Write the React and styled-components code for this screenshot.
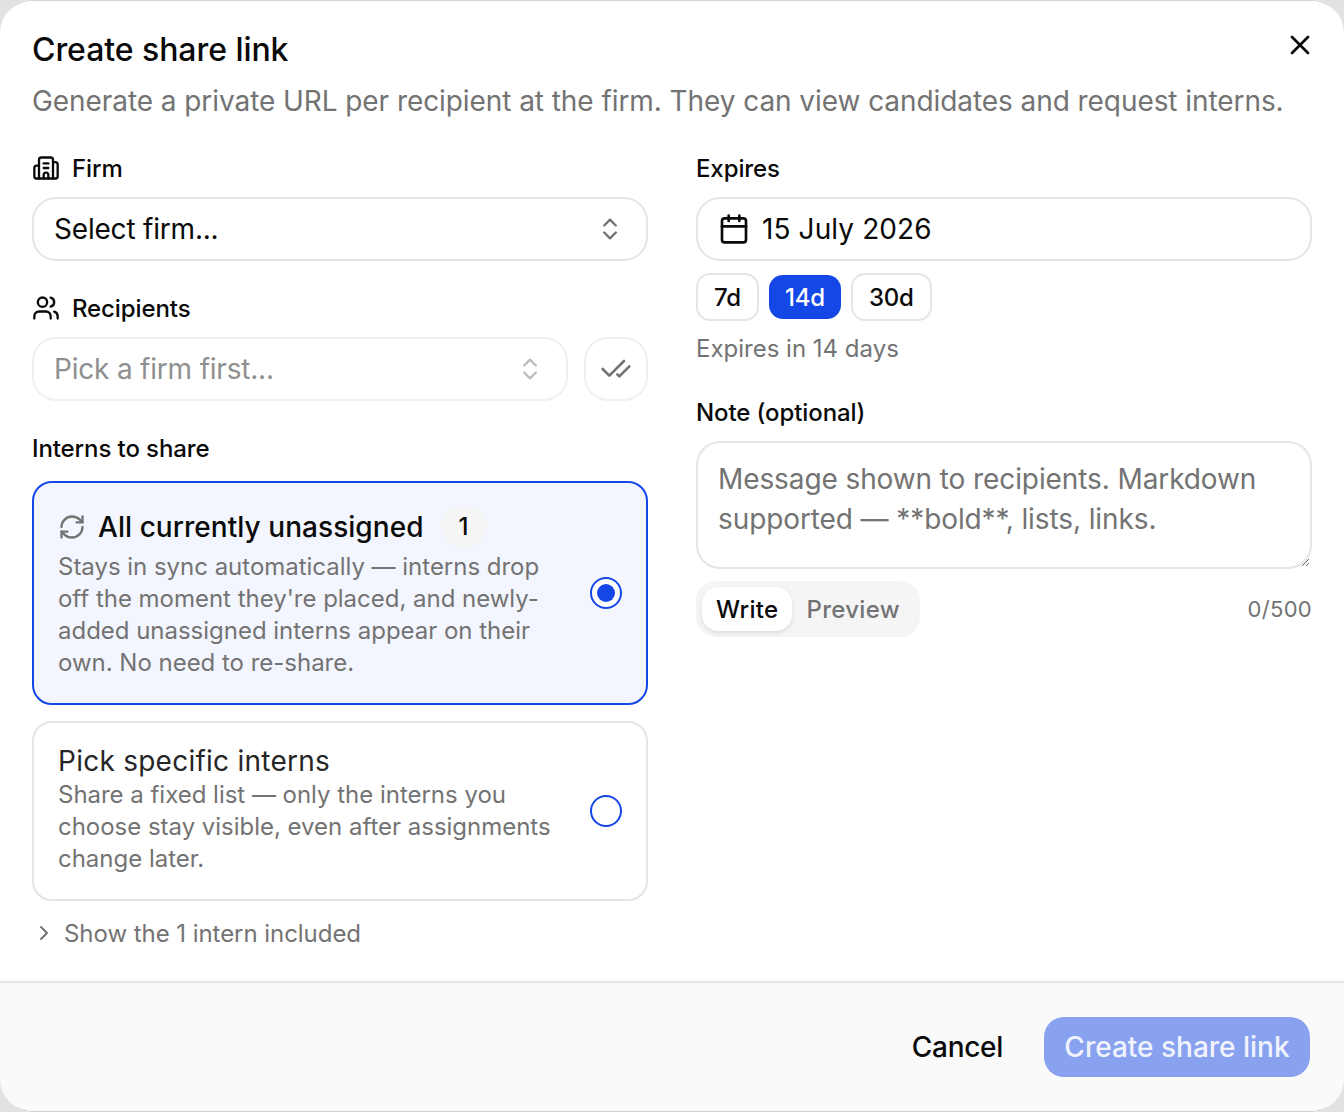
import React from "react";
import styled, { createGlobalStyle } from "styled-components";
import { Building2, Users, ChevronsUpDown, CheckCheck, Calendar, RefreshCw, ChevronRight, X } from "lucide-react";

const Global = createGlobalStyle`
	* { box-sizing: border-box; }
	html, body { margin: 0; padding: 0; height: 100%; }
	body { font-family: Inter, "Noto Sans", sans-serif; color: #0a0a0a; overflow: hidden; }
`;

const Backdrop = styled.div`
	width: 1344px;
	height: 1112px;
	background: #e2e2e2;
	overflow: hidden;
`;

const Modal = styled.div`
	position: relative;
	width: 100%;
	height: 100%;
	display: flex;
	flex-direction: column;
	background: #fff;
	border-radius: 32px;
	overflow: hidden;
	&::after {
		content: "";
		position: absolute;
		inset: 0;
		border-radius: 32px;
		box-shadow: inset 0 1px 0 #d4d4d4, inset 0 -1px 0 #cfcfcf;
		pointer-events: none;
	}
`;

const Body = styled.div`
	flex: 1;
	padding: 32px 32px 0;
`;

const Title = styled.h2`
	margin: 0;
	font-size: 32px;
	line-height: 36px;
	font-weight: 450;
	letter-spacing: -0.06px;
`;

const Subtitle = styled.p`
	margin: 13px 0 0;
	font-size: 28px;
	line-height: 40px;
	color: #737373;
	letter-spacing: -0.07px;
`;

const CloseButton = styled.button`
	position: absolute;
	top: 27px;
	right: 26px;
	width: 36px;
	height: 36px;
	padding: 0;
	display: flex;
	align-items: center;
	justify-content: center;
	background: none;
	border: none;
	color: #0a0a0a;
`;

const Columns = styled.div`
	display: grid;
	grid-template-columns: 616px 616px;
	column-gap: 48px;
	margin-top: 32px;
`;

const Column = styled.div`
	display: flex;
	flex-direction: column;
`;

const Label = styled.div`
	display: flex;
	align-items: center;
	gap: 12px;
	height: 32px;
	padding-bottom: 2px;
	margin-top: ${(p) => (p.$first ? 0 : "32px")};
	margin-bottom: ${(p) => (p.$wide ? "16px" : "12px")};
	font-size: 24px;
	font-weight: 450;
	letter-spacing: -0.1px;
`;

const Row = styled.div`
	display: flex;
	gap: 16px;
`;

const Select = styled.div`
	flex: 1 0 64px;
	max-height: 64px;
	height: 64px;
	display: flex;
	align-items: center;
	justify-content: space-between;
	padding: 0 22px 0 20px;
	border: 2px solid ${(p) => (p.$disabled ? "#f0f0f0" : "#e5e5e5")};
	border-radius: 24px;
	font-size: 28px;
	letter-spacing: -0.2px;
	color: ${(p) => (p.$disabled ? "#8f8f8f" : "#0a0a0a")};
	svg { color: ${(p) => (p.$disabled ? "#bcbcbc" : "#737373")}; }
`;

const SquareButton = styled.div`
	width: 64px;
	height: 64px;
	display: flex;
	align-items: center;
	justify-content: center;
	border: 2px solid #f0f0f0;
	border-radius: 24px;
	color: #737373;
`;

const OptionCard = styled.div`
	display: flex;
	align-items: center;
	gap: 24px;
	padding: 24px;
	margin-bottom: 16px;
	border: 2px solid ${(p) => (p.$active ? "#1447e6" : "#e5e5e5")};
	border-radius: 20px;
	background: ${(p) => (p.$active ? "#f3f6fe" : "#fff")};
`;

const OptionText = styled.div`
	flex: 1;
	min-width: 0;
`;

const OptionHead = styled.div`
	display: flex;
	align-items: center;
	gap: 12px;
	min-height: 28px;
	font-size: 28px;
	line-height: 28px;
	font-weight: ${(p) => (p.$muted ? 420 : 450)};
	letter-spacing: ${(p) => (p.$muted ? "0.25px" : "0.05px")};
	color: ${(p) => (p.$muted ? "#262626" : "#0a0a0a")};
	svg { color: #737373; }
`;

const CountBadge = styled.span`
	width: 46px;
	height: 40px;
	margin-left: 5px;
	display: flex;
	align-items: center;
	justify-content: center;
	border-radius: 20px;
	background: #f5f5f5;
	font-size: 24px;
`;

const OptionDesc = styled.p`
	margin: 4px 0 0;
	font-size: 24px;
	line-height: 32px;
	letter-spacing: -0.02px;
	color: #737373;
`;

const Radio = styled.span`
	flex: none;
	width: 32px;
	height: 32px;
	display: flex;
	align-items: center;
	justify-content: center;
	border: 2px solid #1447e6;
	border-radius: 50%;
	background: #fff;
	&::after {
		content: "";
		display: ${(p) => (p.$checked ? "block" : "none")};
		width: 18px;
		height: 18px;
		border-radius: 50%;
		background: #1447e6;
	}
`;

const Disclosure = styled.div`
	display: flex;
	align-items: center;
	gap: 8px;
	height: 32px;
	font-size: 24px;
	letter-spacing: -0.05px;
	color: #737373;
`;

const DateField = styled(Select)`
	flex: none;
	justify-content: flex-start;
	gap: 12px;
	padding: 0 20px;
	letter-spacing: 0.1px;
	svg { color: #0a0a0a; }
`;

const Chips = styled.div`
	display: flex;
	align-items: center;
	gap: 10px;
	margin-top: 12px;
`;

const Chip = styled.div`
	height: ${(p) => (p.$active ? "44px" : "48px")};
	padding: 0 16px;
	display: flex;
	align-items: center;
	justify-content: center;
	border: ${(p) => (p.$active ? "none" : "2px solid #e5e5e5")};
	border-radius: 14px;
	background: ${(p) => (p.$active ? "#1447e6" : "#fff")};
	color: ${(p) => (p.$active ? "#fff" : "#0a0a0a")};
	font-size: 24px;
	font-weight: 450;
	letter-spacing: -0.2px;
`;

const Hint = styled.div`
	margin-top: 12px;
	font-size: 24px;
	line-height: 32px;
	color: #737373;
`;

const NoteArea = styled.textarea`
	display: block;
	width: 100%;
	height: 128px;
	padding: 16px 20px;
	border: 2px solid #e5e5e5;
	border-radius: 24px;
	outline: none;
	resize: vertical;
	font-family: inherit;
	font-size: 28px;
	line-height: 40px;
	letter-spacing: -0.1px;
	&::placeholder { color: #737373; opacity: 1; }
`;

const NoteBar = styled.div`
	display: flex;
	align-items: center;
	justify-content: space-between;
	margin-top: 12px;
`;

const Tabs = styled.div`
	display: flex;
	height: 56px;
	padding: 6px;
	border-radius: 20px;
	background: #f5f5f5;
`;

const Tab = styled.div`
	display: flex;
	align-items: center;
	padding: 0 14px;
	border-radius: 16px;
	font-size: 24px;
	font-weight: 450;
	letter-spacing: 0.3px;
	color: ${(p) => (p.$active ? "#0a0a0a" : "#737373")};
	background: ${(p) => (p.$active ? "#fff" : "transparent")};
	box-shadow: ${(p) => (p.$active ? "0 2px 4px rgba(0,0,0,0.1)" : "none")};
`;

const Counter = styled.span`
	font-size: 22px;
	letter-spacing: 0.3px;
	color: #737373;
`;

const Footer = styled.div`
	height: 131px;
	display: flex;
	align-items: center;
	justify-content: flex-end;
	gap: 20px;
	padding: 0 34px 2px 0;
	border-top: 2px solid #e5e5e5;
	background: #fafafa;
`;

const GhostButton = styled.button`
	height: 60px;
	padding: 0 21px;
	border: none;
	background: none;
	font-family: inherit;
	font-size: 28px;
	font-weight: 450;
	letter-spacing: -0.3px;
	color: #0a0a0a;
`;

const PrimaryButton = styled.button`
	width: 266px;
	height: 60px;
	border: none;
	border-radius: 20px;
	background: #89a2ef;
	font-family: inherit;
	font-size: 28px;
	font-weight: 450;
	color: #f0f3fd;
`;

export default function App() {
	return (
		<Backdrop>
			<Global />
			<Modal>
				<CloseButton><X size={32} /></CloseButton>
				<Body>
					<Title>Create share link</Title>
					<Subtitle>Generate a private URL per recipient at the firm. They can view candidates and request interns.</Subtitle>
					<Columns>
						<Column>
							<Label $first><Building2 size={28} />Firm</Label>
							<Select>Select firm...<ChevronsUpDown size={28} /></Select>
							<Label><Users size={28} />Recipients</Label>
							<Row>
								<Select $disabled>Pick a firm first...<ChevronsUpDown size={28} /></Select>
								<SquareButton><CheckCheck size={32} /></SquareButton>
							</Row>
							<Label $wide>Interns to share</Label>
							<OptionCard $active>
								<OptionText>
									<OptionHead><RefreshCw size={28} />All currently unassigned<CountBadge>1</CountBadge></OptionHead>
									<OptionDesc>Stays in sync automatically — interns drop off the moment they're placed, and newly-added unassigned interns appear on their own. No need to re-share.</OptionDesc>
								</OptionText>
								<Radio $checked />
							</OptionCard>
							<OptionCard>
								<OptionText>
									<OptionHead $muted>Pick specific interns</OptionHead>
									<OptionDesc>Share a fixed list — only the interns you choose stay visible, even after assignments change later.</OptionDesc>
								</OptionText>
								<Radio />
							</OptionCard>
							<Disclosure><ChevronRight size={24} />Show the 1 intern included</Disclosure>
						</Column>
						<Column>
							<Label $first>Expires</Label>
							<DateField><Calendar size={32} />15 July 2026</DateField>
							<Chips>
								<Chip>7d</Chip>
								<Chip $active>14d</Chip>
								<Chip>30d</Chip>
							</Chips>
							<Hint>Expires in 14 days</Hint>
							<Label>Note (optional)</Label>
							<NoteArea placeholder="Message shown to recipients. Markdown supported — **bold**, lists, links." />
							<NoteBar>
								<Tabs>
									<Tab $active>Write</Tab>
									<Tab>Preview</Tab>
								</Tabs>
								<Counter>0/500</Counter>
							</NoteBar>
						</Column>
					</Columns>
				</Body>
				<Footer>
					<GhostButton>Cancel</GhostButton>
					<PrimaryButton>Create share link</PrimaryButton>
				</Footer>
			</Modal>
		</Backdrop>
	);
}
